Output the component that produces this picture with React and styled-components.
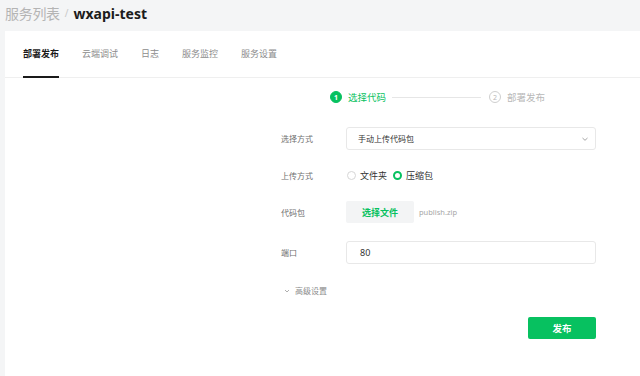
import React from "react";
import styled, { createGlobalStyle } from "styled-components";

const GlobalStyle = createGlobalStyle`
  html, body {
    margin: 0;
    padding: 0;
    background: #f4f5f6;
    font-family: "Noto Sans", "Noto Sans CJK SC", sans-serif;
  }
`;

const App = () => {
  const tabs = ["部署发布", "云端调试", "日志", "服务监控", "服务设置"];
  return (
    <Page>
      <GlobalStyle />
      <Header>
        <Crumb>服务列表</Crumb>
        <Slash>/</Slash>
        <Title>wxapi-test</Title>
      </Header>
      <Card>
        <Tabs>
          {tabs.map((t, i) => (
            <Tab key={t} active={i === 0}>
              {t}
            </Tab>
          ))}
        </Tabs>
        <Body>
          <Steps>
            <Step active>
              <StepDot active>1</StepDot>
              选择代码
            </Step>
            <StepLine />
            <Step>
              <StepDot>2</StepDot>
              部署发布
            </Step>
          </Steps>

          <Row top={23}>
            <Label>选择方式</Label>
            <Select>
              手动上传代码包
              <svg width="8" height="8" viewBox="0 0 8 8">
                <path d="M1.5 3 L4 5.3 L6.5 3" fill="none" stroke="#9a9a9a" strokeWidth="0.9" />
              </svg>
            </Select>
          </Row>

          <Row top={14}>
            <Label>上传方式</Label>
            <Radios>
              <Radio />
              <RadioText>文件夹</RadioText>
              <Radio checked />
              <RadioText>压缩包</RadioText>
            </Radios>
          </Row>

          <Row top={15}>
            <Label>代码包</Label>
            <FileLine>
              <FileButton>选择文件</FileButton>
              <FileName>publish.zip</FileName>
            </FileLine>
          </Row>

          <Row top={18}>
            <Label>端口</Label>
            <Input>80</Input>
          </Row>

          <Advanced>
            <svg width="6" height="6" viewBox="0 0 6 6">
              <path d="M1 2 L3 4 L5 2" fill="none" stroke="#9a9a9a" strokeWidth="0.8" />
            </svg>
            高级设置
          </Advanced>

          <Actions>
            <Publish>发布</Publish>
          </Actions>
        </Body>
      </Card>
    </Page>
  );
};

export default App;

const Page = styled.div`
  width: 640px;
  height: 376px;
  overflow: hidden;
  display: flex;
  flex-direction: column;
  padding-left: 5px;
  box-sizing: border-box;
`;

const Header = styled.div`
  height: 31px;
  display: flex;
  align-items: center;
  padding-bottom: 5px;
  box-sizing: border-box;
`;

const Crumb = styled.span`
  font-size: 14px;
  color: #b4b4b4;
  letter-spacing: -0.3px;
`;

const Slash = styled.span`
  font-size: 10px;
  color: #c8c8c8;
  margin: 0 5px 0 5px;
`;

const Title = styled.span`
  font-size: 14px;
  font-weight: 700;
  color: #1c1c1c;
`;

const Card = styled.div`
  flex: 1;
  background: #fff;
  display: flex;
  flex-direction: column;
`;

const Tabs = styled.div`
  display: flex;
  height: 46px;
  padding-left: 18px;
  border-bottom: 1px solid #efefef;
`;

const Tab = styled.div`
  display: flex;
  align-items: center;
  margin-right: 23px;
  font-size: 9px;
  font-weight: ${(p) => (p.active ? 700 : 400)};
  color: ${(p) => (p.active ? "#1a1a1a" : "#8c8c8c")};
  border-bottom: 2px solid ${(p) => (p.active ? "#1a1a1a" : "transparent")};
  margin-bottom: -1px;
  padding-bottom: 1px;
`;

const Body = styled.div`
  display: flex;
  flex-direction: column;
  padding-left: 276px;
  width: 591px;
  box-sizing: border-box;
`;

const Steps = styled.div`
  display: flex;
  align-items: center;
  height: 14px;
  margin-top: 12px;
  margin-left: 49px;
`;

const Step = styled.div`
  display: flex;
  align-items: center;
  font-size: 9.5px;
  color: ${(p) => (p.active ? "#07c160" : "#b8b8b8")};
`;

const StepDot = styled.span`
  width: 12px;
  height: 12px;
  border-radius: 50%;
  box-sizing: border-box;
  display: flex;
  align-items: center;
  justify-content: center;
  margin-right: 6px;
  font-size: 7px;
  font-weight: ${(p) => (p.active ? 700 : 400)};
  background: ${(p) => (p.active ? "#07c160" : "#fff")};
  color: ${(p) => (p.active ? "#fff" : "#b8b8b8")};
  border: 1px solid ${(p) => (p.active ? "#07c160" : "#cfcfcf")};
`;

const StepLine = styled.div`
  width: 89px;
  height: 1px;
  background: #e6e6e6;
  margin: 0 8px 0 6px;
`;

const Row = styled.div`
  display: flex;
  align-items: center;
  margin-top: ${(p) => p.top}px;
  min-height: 22px;
`;

const Label = styled.div`
  width: 65px;
  flex-shrink: 0;
  font-size: 8px;
  color: #6f6f6f;
`;

const Select = styled.div`
  width: 250px;
  height: 23px;
  box-sizing: border-box;
  border: 1px solid #e8e8e8;
  border-radius: 3px;
  display: flex;
  align-items: center;
  justify-content: space-between;
  padding: 0 6px 0 11px;
  font-size: 8px;
  color: #333;
`;

const Radios = styled.div`
  display: flex;
  align-items: center;
  height: 22px;
`;

const Radio = styled.span`
  width: 9px;
  height: 9px;
  box-sizing: border-box;
  border-radius: 50%;
  margin: 0 4px 0 ${(p) => (p.checked ? 6 : 1)}px;
  border: ${(p) => (p.checked ? "2.5px solid #07c160" : "1px solid #d6d6d6")};
`;

const RadioText = styled.span`
  font-size: 9px;
  color: #333;
`;

const FileLine = styled.div`
  display: flex;
  align-items: center;
`;

const FileButton = styled.div`
  width: 68px;
  height: 22px;
  background: #f3f4f5;
  border-radius: 2px;
  display: flex;
  align-items: center;
  justify-content: center;
  font-size: 9px;
  font-weight: 700;
  color: #07c160;
`;

const FileName = styled.span`
  margin-left: 5px;
  font-size: 7.5px;
  color: #a6a6a6;
`;

const Input = styled.div`
  width: 250px;
  height: 23px;
  box-sizing: border-box;
  border: 1px solid #e8e8e8;
  border-radius: 3px;
  display: flex;
  align-items: center;
  padding-left: 13px;
  font-size: 9px;
  color: #333;
`;

const Advanced = styled.div`
  display: flex;
  align-items: center;
  gap: 5px;
  margin-top: 21px;
  padding-left: 3px;
  font-size: 8px;
  color: #8c8c8c;
`;

const Actions = styled.div`
  display: flex;
  justify-content: flex-end;
  margin-top: 21px;
  width: 315px;
`;

const Publish = styled.div`
  width: 68px;
  height: 22px;
  background: #07c160;
  border-radius: 2px;
  color: #fff;
  font-size: 9.5px;
  font-weight: 700;
  display: flex;
  align-items: center;
  justify-content: center;
`;
